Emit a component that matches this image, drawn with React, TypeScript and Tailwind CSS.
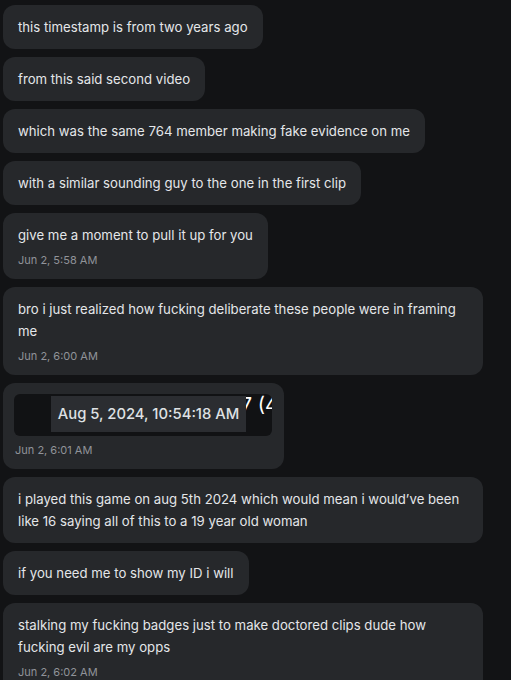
import React from "react";

type Msg = {
  text?: string;
  time?: string;
  embed?: boolean;
};

const messages: Msg[] = [
  { text: "this timestamp is from two years ago" },
  { text: "from this said second video" },
  { text: "which was the same 764 member making fake evidence on me" },
  { text: "with a similar sounding guy to the one in the first clip" },
  { text: "give me a moment to pull it up for you", time: "Jun 2, 5:58 AM" },
  {
    text: "bro i just realized how fucking deliberate these people were in framing me",
    time: "Jun 2, 6:00 AM",
  },
  { embed: true, time: "Jun 2, 6:01 AM" },
  {
    text: "i played this game on aug 5th 2024 which would mean i would\u2019ve been like 16 saying all of this to a 19 year old woman",
  },
  { text: "if you need me to show my ID i will" },
  {
    text: "stalking my fucking badges just to make doctored clips dude how fucking evil are my opps",
    time: "Jun 2, 6:02 AM",
  },
];

const EmbedPreview = () => {
  return (
    <div className="relative w-[258px] h-[42px] rounded-md bg-[#111214] overflow-hidden">
      <div className="absolute right-[-6px] top-[-1px] whitespace-nowrap text-[20px] leading-[24px] text-white">
        Messages by 1337 (4
      </div>
      <div className="absolute left-[37px] top-[2px] w-[195px] h-[36px] bg-[#2b2d31] flex items-center justify-center">
        <span className="whitespace-nowrap text-[14.8px] font-medium text-[#dfe1e4]">
          Aug 5, 2024, 10:54:18 AM
        </span>
      </div>
    </div>
  );
};

const Bubble = ({ msg }: { msg: Msg }) => {
  if (msg.embed) {
    return (
      <div className="w-fit rounded-xl bg-[#26282b] pl-[11px] pr-[12px] pt-[11px] pb-[11px]">
        <EmbedPreview />
        <div className="mt-[6px] pl-[1px] text-[11px] leading-4 text-[#909399]">
          {msg.time}
        </div>
      </div>
    );
  }
  return (
    <div className="w-fit max-w-[480px] rounded-xl bg-[#26282b] px-[15px] pt-[11px] pb-[11px]">
      <p className="text-[13.2px] leading-[22px] text-[#e4e6e9]">{msg.text}</p>
      {msg.time && (
        <div className="mt-[6px] text-[11px] leading-4 text-[#909399]">
          {msg.time}
        </div>
      )}
    </div>
  );
};

export default function App() {
  return (
    <div
      className="w-[511px] h-[680px] overflow-hidden bg-[#121315] pl-[3px] pt-[5px]"
      style={{ fontFamily: "Inter, 'Noto Sans', sans-serif" }}
    >
      <div className="flex flex-col gap-2">
        {messages.map((m, i) => (
          <Bubble key={i} msg={m} />
        ))}
      </div>
    </div>
  );
}
